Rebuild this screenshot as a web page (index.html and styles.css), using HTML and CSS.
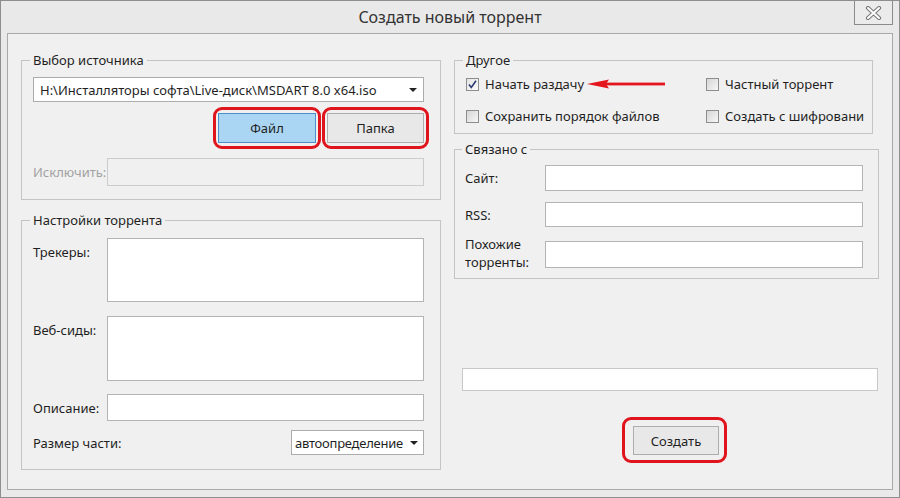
FILE: index.html
```html
<!DOCTYPE html>
<html lang="ru">
<head>
<meta charset="utf-8">
<title>Создать новый торрент</title>
<link rel="stylesheet" href="styles.css">
</head>
<body>
<div class="window">
  <header class="titlebar">
    <h1 class="title">Создать новый торрент</h1>
    <button class="close" aria-label="Закрыть">
      <svg width="17" height="14" viewBox="0 0 17 14">
        <path d="M3 2 L14 12 M14 2 L3 12" stroke="#7a7a7a" stroke-width="4.2" stroke-linecap="round" fill="none"/>
        <path d="M3 2 L14 12 M14 2 L3 12" stroke="#ffffff" stroke-width="2" stroke-linecap="round" fill="none"/>
      </svg>
    </button>
  </header>
  <main class="client">
    <div class="col">
      <fieldset class="group g-source">
        <legend>Выбор источника</legend>
        <div class="combo combo-path"><span class="combo-text">H:\Инсталляторы софта\Live-диск\MSDART 8.0 x64.iso</span><span class="caret"></span></div>
        <div class="btn-row">
          <span class="hl"><button class="btn btn-active btn-file">Файл</button></span>
          <span class="hl"><button class="btn btn-folder">Папка</button></span>
        </div>
        <div class="row row-exclude">
          <label class="lbl lbl-disabled">Исключить:</label>
          <input class="input input-disabled" type="text" disabled>
        </div>
      </fieldset>
      <fieldset class="group g-settings">
        <legend>Настройки торрента</legend>
        <div class="row row-top">
          <label class="lbl lbl-top">Трекеры:</label>
          <textarea class="area area-trackers"></textarea>
        </div>
        <div class="row row-top row-seeds">
          <label class="lbl lbl-top">Веб-сиды:</label>
          <textarea class="area area-seeds"></textarea>
        </div>
        <div class="row row-desc">
          <label class="lbl">Описание:</label>
          <input class="input input-desc" type="text">
        </div>
        <div class="row row-piece">
          <label class="lbl lbl-wide">Размер части:</label>
          <div class="combo combo-piece"><span class="combo-text piece-text">автоопределение</span><span class="caret"></span></div>
        </div>
      </fieldset>
    </div>
    <div class="col">
      <fieldset class="group g-other">
        <legend>Другое</legend>
        <div class="checks">
          <div class="check">
            <span class="cb cb-on"><svg width="11" height="11" viewBox="0 0 11 11"><path d="M2 5.5 L4.3 8.5 L9 1.8" stroke="#2b3a70" stroke-width="1.6" fill="none"/></svg></span>
            <span class="check-text">Начать раздачу</span>
            <svg class="arrow" width="80" height="10" viewBox="0 0 80 10"><polygon points="0,5 22,0.5 19,5 22,9.5" fill="#e3161e"/><rect x="18" y="3.6" width="60" height="2.8" fill="#e3161e"/></svg>
          </div>
          <div class="check">
            <span class="cb"></span>
            <span class="check-text">Частный торрент</span>
          </div>
          <div class="check">
            <span class="cb"></span>
            <span class="check-text">Сохранить порядок файлов</span>
          </div>
          <div class="check">
            <span class="cb"></span>
            <span class="check-text">Создать с шифровани</span>
          </div>
        </div>
      </fieldset>
      <fieldset class="group g-linked">
        <legend>Связано с</legend>
        <div class="row">
          <label class="lbl lbl-r">Сайт:</label>
          <input class="input input-site" type="text">
        </div>
        <div class="row row-rss">
          <label class="lbl lbl-r">RSS:</label>
          <input class="input input-rss" type="text">
        </div>
        <div class="row row-similar">
          <label class="lbl lbl-r lbl-2line">Похожие<br>торренты:</label>
          <input class="input input-similar" type="text">
        </div>
      </fieldset>
      <div class="progress"></div>
      <span class="hl hl-create"><button class="btn btn-create">Создать</button></span>
    </div>
  </main>
</div>
</body>
</html>
```

FILE: styles.css
```css
html, body {
  margin: 0;
  padding: 0;
}
body {
  font-family: "Noto Sans", "Open Sans", sans-serif;
  font-size: 13px;
  color: #1f1f1f;
  background: #e9e9e9;
}
.window {
  width: 900px;
  height: 498px;
  box-sizing: border-box;
  border: 1px solid #8e8e8e;
  background: #e9e9e9;
  display: flex;
  flex-direction: column;
  overflow: hidden;
}
.titlebar {
  height: 32px;
  flex: none;
  display: grid;
  grid-template-columns: 1fr auto 1fr;
  align-items: start;
}
.title {
  grid-column: 2;
  margin: 0;
  font-weight: normal;
  font-size: 16px;
  line-height: 32px;
  color: #333;
}
.close {
  grid-column: 3;
  justify-self: end;
  margin: 0 6px 0 0;
  width: 39px;
  height: 24px;
  box-sizing: border-box;
  border: 1px solid #8b8b8b;
  border-top: 0;
  background: #ebebeb;
  padding: 0;
  display: flex;
  align-items: center;
  justify-content: center;
}
.client {
  margin: 0 6px;
  height: 457px;
  flex: none;
  box-sizing: border-box;
  border: 1px solid #a9a9a9;
  background: #f0f0f0;
  padding: 17px 0 0 13px;
  display: grid;
  grid-template-columns: 420px 425px;
  column-gap: 13px;
  align-items: start;
}
.col {
  display: flex;
  flex-direction: column;
  align-items: flex-start;
}
.group {
  margin: 0;
  border: 1px solid #c4c4c4;
  box-sizing: border-box;
  min-width: 0;
}
.group legend {
  padding: 0 3px;
  margin-left: -3px;
  line-height: 18px;
  font-size: 13px;
  color: #1f1f1f;
}
.g-source {
  width: 420px;
  padding: 8px 16px 13px 11px;
}
.g-settings {
  width: 420px;
  margin-top: 11px;
  padding: 9px 16px 14px 11px;
}
.g-other {
  width: 419px;
  padding: 6px 11px 8px 11px;
}
.g-linked {
  width: 425px;
  margin-top: 6px;
  padding: 7px 15px 10px 10px;
}
.combo {
  display: flex;
  align-items: center;
  box-sizing: border-box;
  height: 25px;
  background: #fff;
  border: 1px solid #acacac;
  padding: 0 6px 0 6px;
}
.combo-text {
  flex: 1;
  white-space: nowrap;
}
.caret {
  flex: none;
  width: 0;
  height: 0;
  border-left: 4px solid transparent;
  border-right: 4px solid transparent;
  border-top: 4px solid #222;
  margin-left: 6px;
}
.combo-path {
  width: 391px;
}
.combo-piece {
  width: 133px;
  padding: 0 5px 0 3px;
}
.combo-piece .caret {
  margin-left: 2px;
}
.piece-text {
  letter-spacing: -0.25px;
}
.btn-row {
  display: flex;
  justify-content: flex-end;
  gap: 11px;
  margin-top: 11px;
}
.hl {
  position: relative;
  display: inline-flex;
}
.hl::after {
  content: "";
  position: absolute;
  top: -6px;
  left: -5px;
  right: -5px;
  bottom: -6px;
  border: 3px solid #e0141c;
  border-radius: 9px;
  pointer-events: none;
}
.btn {
  font: inherit;
  font-size: 13px;
  color: #1f1f1f;
  height: 30px;
  box-sizing: border-box;
  background: #e8e8e8;
  border: 1px solid #adadad;
  padding: 0;
}
.btn-file {
  width: 98px;
}
.btn-folder {
  width: 97px;
}
.btn-active {
  background: #aad6f3;
  border-color: #4d8fc8;
}
.row {
  display: flex;
  align-items: center;
}
.row-top {
  align-items: flex-start;
}
.row-exclude {
  margin-top: 15px;
}
.row-seeds {
  margin-top: 14px;
}
.row-desc {
  margin-top: 13px;
}
.row-piece {
  margin-top: 9px;
  justify-content: space-between;
}
.lbl {
  width: 74px;
  flex: none;
  line-height: 18px;
}
.lbl-top {
  padding-top: 5px;
}
.lbl-wide {
  width: auto;
}
.lbl-disabled {
  color: #a2a2a2;
}
.lbl-r {
  width: 80px;
}
.lbl-2line {
  margin: -6px 0 -3px;
}
.input, .area {
  font: inherit;
  box-sizing: border-box;
  margin: 0;
  background: #fff;
  border: 1px solid #b4b4b4;
  padding: 0 4px;
  outline: none;
}
.area {
  resize: none;
  width: 317px;
}
.input-disabled {
  width: 317px;
  height: 28px;
  background: #f0f0f0;
  border-color: #cccccc;
}
.area-trackers {
  height: 64px;
}
.area-seeds {
  height: 65px;
}
.input-desc {
  width: 317px;
  height: 27px;
}
.checks {
  display: grid;
  grid-template-columns: 240px 156px;
  row-gap: 14px;
}
.check {
  display: flex;
  align-items: center;
  height: 18px;
  white-space: nowrap;
}
.cb {
  flex: none;
  width: 13px;
  height: 13px;
  box-sizing: border-box;
  border: 1px solid #8d8d8d;
  background: linear-gradient(135deg, #d6d6d6, #f6f6f6);
  display: flex;
  align-items: center;
  justify-content: center;
  margin-right: 6px;
}
.cb-on {
  background: linear-gradient(135deg, #e4e4e4, #fbfbfb);
}
.arrow {
  flex: none;
  margin-left: 3px;
}
.input-site {
  width: 318px;
  height: 26px;
}
.row-rss {
  margin-top: 11px;
}
.input-rss {
  width: 318px;
  height: 25px;
}
.row-similar {
  margin-top: 14px;
}
.input-similar {
  width: 318px;
  height: 27px;
}
.progress {
  width: 416px;
  height: 23px;
  box-sizing: border-box;
  margin: 89px 0 0 8px;
  background: #fff;
  border: 1px solid #c8c8c8;
}
.hl-create {
  margin: 35px 0 0 179px;
}
.hl-create::after {
  top: -9px;
  left: -11px;
  right: -8px;
  bottom: -8px;
}
.btn-create {
  width: 86px;
  height: 29px;
}
```
